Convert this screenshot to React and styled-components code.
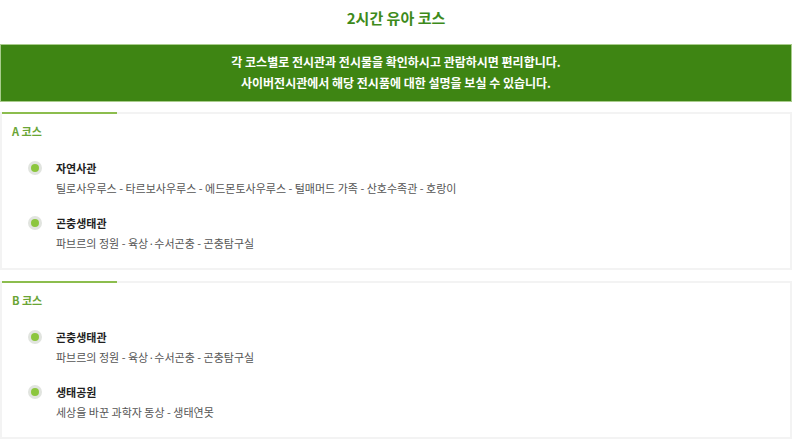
import React from 'react';
import styled, { createGlobalStyle } from 'styled-components';

const GlobalStyle = createGlobalStyle`
  body {
    margin: 0;
    background: #ffffff;
    font-family: "Noto Sans CJK KR", "Noto Sans", sans-serif;
  }
`;

const Page = styled.div`
  width: 792px;
`;

const Title = styled.h1`
  margin: 0;
  padding: 9px 0 17px;
  font-size: 15px;
  line-height: 18px;
  font-weight: 700;
  text-align: center;
  color: #3d8a1a;
`;

const Banner = styled.div`
  padding: 6px 0 8px;
  border: 1px solid #a9cc8c;
  background: #3e8513;
  color: #ffffff;
  font-size: 12px;
  font-weight: 700;
  line-height: 21px;
  text-align: center;
`;

const Courses = styled.div`
  display: flex;
  flex-direction: column;
  gap: 11px;
  margin-top: 10px;
`;

const Card = styled.section`
  position: relative;
  border: 2px solid #f3f3f3;
  padding: 9px 0 17px;

  &::before {
    content: '';
    position: absolute;
    top: -2px;
    left: 0;
    width: 115px;
    height: 2px;
    background: #8cbd4e;
  }
`;

const CourseName = styled.h2`
  margin: 0;
  padding-left: 10px;
  font-size: 11px;
  line-height: 16px;
  font-weight: 700;
  color: #6aa535;
`;

const List = styled.ul`
  list-style: none;
  margin: 21px 0 0;
  padding: 0 0 0 26px;
  display: flex;
  flex-direction: column;
  gap: 19px;
`;

const Item = styled.li`
  display: flex;
  gap: 14px;
`;

const Dot = styled.span`
  flex: none;
  width: 14px;
  height: 14px;
  margin-top: 1px;
  border-radius: 50%;
  background: #e1e4df;
  display: flex;
  align-items: center;
  justify-content: center;

  &::after {
    content: '';
    width: 8px;
    height: 8px;
    border-radius: 50%;
    background: #8cc63e;
  }
`;

const Body = styled.div`
  display: flex;
  flex-direction: column;
  gap: 4px;
`;

const Hall = styled.strong`
  font-size: 11px;
  line-height: 16px;
  font-weight: 700;
  color: #1f1f1f;
`;

const Exhibits = styled.span`
  font-size: 11px;
  line-height: 16px;
  color: #555555;
`;

const courses = [
  {
    name: 'A 코스',
    halls: [
      {
        title: '자연사관',
        items: '틸로사우루스 - 타르보사우루스 - 에드몬토사우루스 - 털매머드 가족 - 산호수족관 - 호랑이',
      },
      { title: '곤충생태관', items: '파브르의 정원 - 육상·수서곤충 - 곤충탐구실' },
    ],
  },
  {
    name: 'B 코스',
    halls: [
      { title: '곤충생태관', items: '파브르의 정원 - 육상·수서곤충 - 곤충탐구실' },
      { title: '생태공원', items: '세상을 바꾼 과학자 동상 - 생태연못' },
    ],
  },
];

export default function App() {
  return (
    <Page>
      <GlobalStyle />
      <Title>2시간 유아 코스</Title>
      <Banner>
        각 코스별로 전시관과 전시물을 확인하시고 관람하시면 편리합니다.
        <br />
        사이버전시관에서 해당 전시품에 대한 설명을 보실 수 있습니다.
      </Banner>
      <Courses>
        {courses.map((course) => (
          <Card key={course.name}>
            <CourseName>{course.name}</CourseName>
            <List>
              {course.halls.map((hall) => (
                <Item key={hall.title}>
                  <Dot />
                  <Body>
                    <Hall>{hall.title}</Hall>
                    <Exhibits>{hall.items}</Exhibits>
                  </Body>
                </Item>
              ))}
            </List>
          </Card>
        ))}
      </Courses>
    </Page>
  );
}
